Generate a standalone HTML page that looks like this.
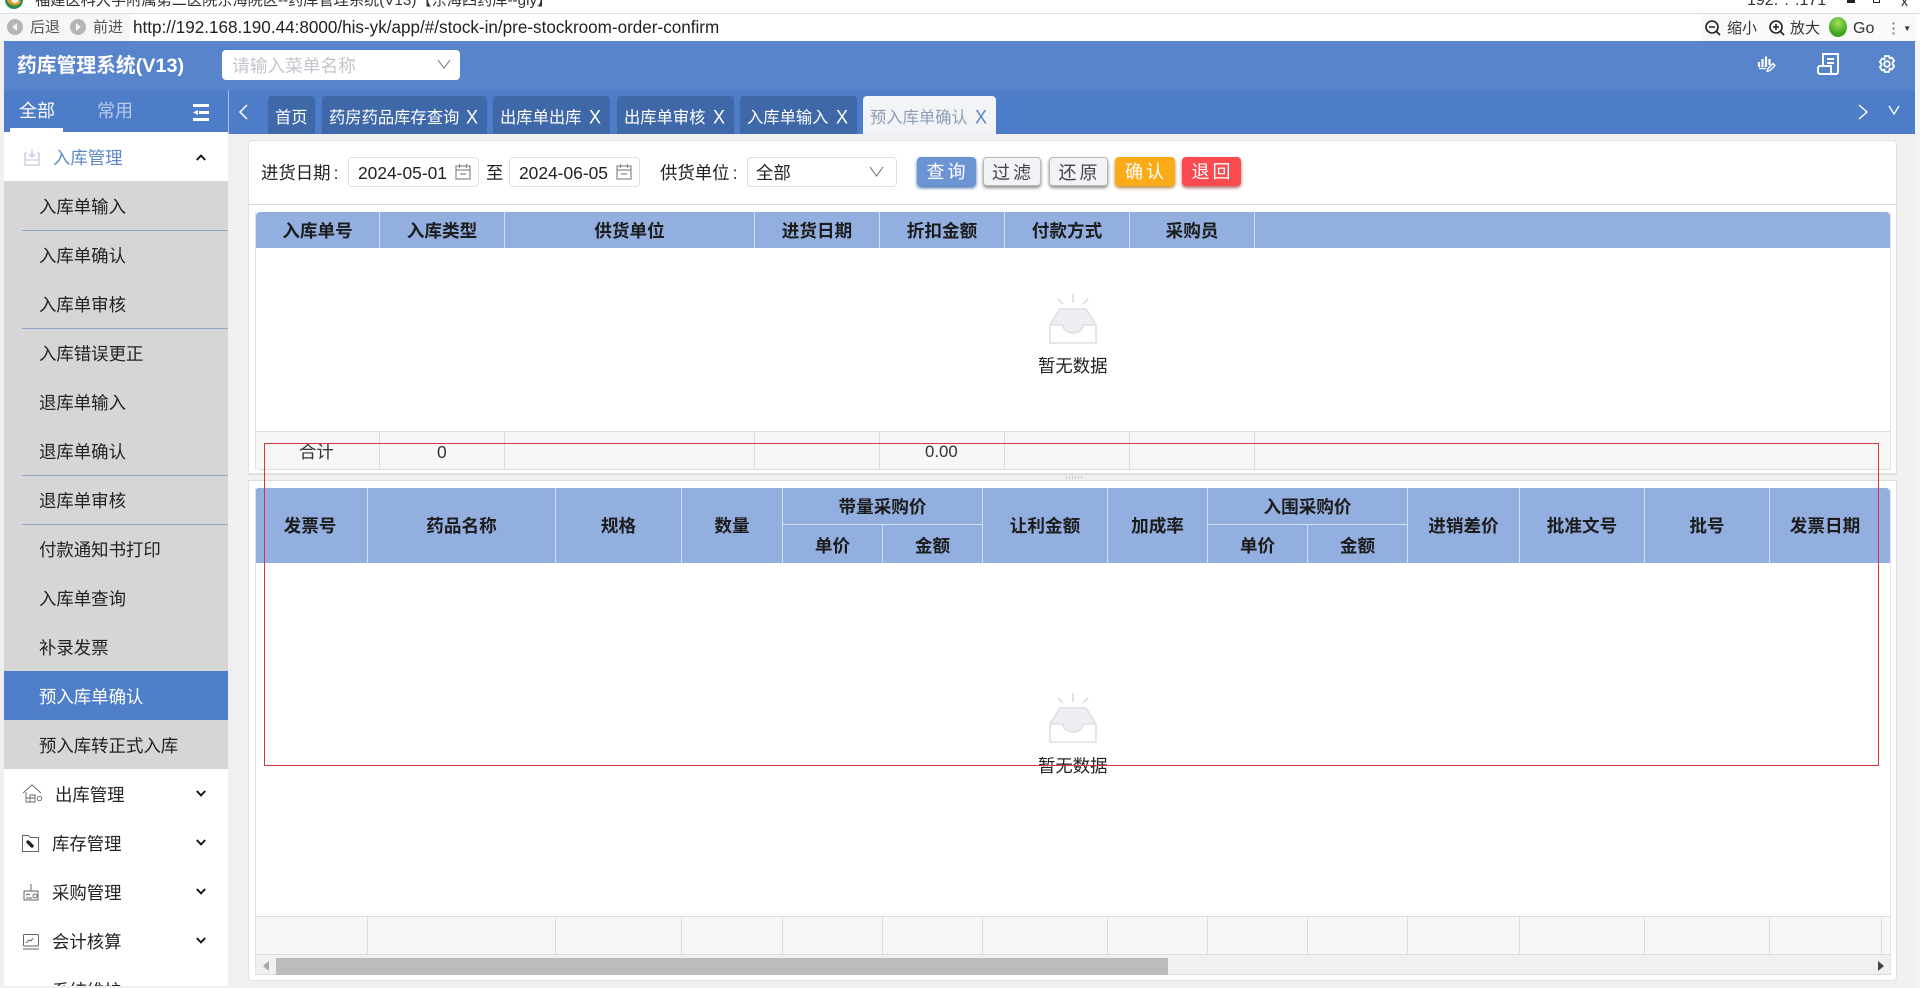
<!DOCTYPE html>
<html lang="zh"><head><meta charset="utf-8"><title>药库管理系统</title>
<style>
*{box-sizing:border-box}
html,body{margin:0;padding:0;width:1920px;height:988px;overflow:hidden;background:#f0f0f0;font-family:"Liberation Sans","Noto Sans CJK SC",sans-serif;color:#222}
.a{position:absolute;white-space:nowrap}
.t{position:absolute;white-space:nowrap;font-size:17.4px;line-height:24px;height:24px}
.tab{position:absolute;top:96px;height:38px;background:#3f68a8;color:#fff;font-size:16.3px;line-height:44px;padding-left:7px;border-radius:4px 4px 0 0;white-space:nowrap}
.tab i{font-style:normal;position:absolute;right:9px;top:-1px;font-size:18px;transform:scaleY(1.1)}
.mi{position:absolute;left:4px;width:224px;height:49px;background:#d6d6d6;font-size:17.4px;line-height:53px;padding-left:35px;color:#222;white-space:nowrap;overflow:hidden}
.sep{position:absolute;left:22px;width:206px;height:1px;background:#8ea6c9}
.mg{position:absolute;left:4px;width:224px;height:49px;background:#fff;font-size:17.4px;line-height:53px;color:#222;white-space:nowrap;overflow:hidden}
.btn{position:absolute;top:157px;height:29px;border-radius:4px;font-size:18px;line-height:30px;text-align:center;letter-spacing:3px;padding-left:2px}
.th{position:absolute;background:#93afdf;border-right:1px solid #d4dff2;font-weight:700;font-size:17.6px;color:#1c1c1c;display:flex;align-items:center;justify-content:center;white-space:nowrap}
.line{position:absolute;background:#dcdcdc}
.input{position:absolute;top:157px;height:30px;background:#fff;border:1px solid #dcdfe6;border-radius:4px}
svg{position:absolute;overflow:visible}
</style></head><body>

<!-- browser chrome -->
<div class="a" style="left:0;top:0;width:1920px;height:13px;background:#fff;overflow:hidden">
<svg style="left:4px;top:-9px" width="20" height="18" viewBox="0 0 20 18"><circle cx="10" cy="9" r="9" fill="#2f8f4e"/><path d="M3 9a8 8 0 0 0 14 2L10 4z" fill="#e89a2b"/><circle cx="11" cy="8" r="4" fill="#f3f3f3"/></svg>
<div class="a" style="left:35px;top:-9px;font-size:15.2px;line-height:20px;color:#333">福建医科大学附属第二医院东海院区--药库管理系统(V13)【东海四药库--gly】</div>
<div class="a" style="left:1747px;top:-9px;font-size:16px;line-height:20px;color:#333">192.*.*.171</div>
<div class="a" style="left:1847px;top:0;width:8px;height:3px;background:#222"></div>
<div class="a" style="left:1873px;top:0;width:7px;height:3px;border:1px solid #222;border-top:0"></div>
<div class="a" style="left:1901px;top:-9px;font-size:14px;line-height:20px;color:#222">x</div>
</div>
<div class="a" style="left:0;top:13px;width:1920px;height:1px;background:#dedede"></div>
<div class="a" style="left:0;top:14px;width:1920px;height:27px;background:#fff"></div>
<div class="a" style="left:0;top:14px;width:130px;height:27px;background:#f6f6f6"></div>
<div class="a" style="left:1701px;top:14px;width:215px;height:27px;background:#f9f9f9"></div>
<svg style="left:6px;top:18px" width="18" height="18" viewBox="0 0 18 18"><circle cx="9" cy="9" r="8" fill="#b5b5b5"/><path d="M11 5L6 9l5 4z" fill="#f4f4f4"/></svg>
<svg style="left:69px;top:18px" width="18" height="18" viewBox="0 0 18 18"><circle cx="9" cy="9" r="8" fill="#b5b5b5"/><path d="M7 5l5 4-5 4z" fill="#f4f4f4"/></svg>
<div class="a" style="left:30px;top:17px;font-size:15px;line-height:22px;color:#555">后退</div>
<div class="a" style="left:93px;top:17px;font-size:15px;line-height:22px;color:#555">前进</div>
<div class="a" style="left:133px;top:17px;font-size:17.1px;line-height:22px;color:#222">http://192.168.190.44:8000/his-yk/app/#/stock-in/pre-stockroom-order-confirm</div>
<svg style="left:1704px;top:19px" width="18" height="18" viewBox="0 0 18 18" fill="none" stroke="#222" stroke-width="1.6"><circle cx="8" cy="8" r="6"/><path d="M12.5 12.5L16 16M5 8h6"/></svg>
<div class="a" style="left:1727px;top:18px;font-size:15px;line-height:22px;color:#333">缩小</div>
<svg style="left:1768px;top:19px" width="18" height="18" viewBox="0 0 18 18" fill="none" stroke="#222" stroke-width="1.6"><circle cx="8" cy="8" r="6"/><path d="M12.5 12.5L16 16M5 8h6M8 5v6"/></svg>
<div class="a" style="left:1790px;top:18px;font-size:15px;line-height:22px;color:#333">放大</div>
<div class="a" style="left:1829px;top:17px;width:18px;height:20px;border-radius:50%;background:radial-gradient(circle at 50% 30%,#a4e05a,#3aa01c 70%)"></div>
<div class="a" style="left:1853px;top:18px;font-size:16px;line-height:22px;color:#333">Go</div>
<div class="a" style="left:1886px;top:18px;font-size:15px;line-height:22px;color:#666">⋮<span style="font-size:8px;color:#333;vertical-align:2px"> ▼</span></div>

<!-- header -->
<div class="a" style="left:0;top:41px;width:4px;height:947px;background:#f0f0f0"></div>
<div class="a" style="left:1915px;top:41px;width:5px;height:947px;background:#f4f4f4"></div>
<div class="a" style="left:4px;top:41px;width:1911px;height:49px;background:#5884cc"></div>
<div class="a" style="left:4px;top:90px;width:1911px;height:44px;background:#4d7cc8"></div>
<div class="a" style="left:17px;top:52px;font-size:19.8px;line-height:28px;font-weight:700;color:#fff">药库管理系统(V13)</div>
<div class="a" style="left:222px;top:50px;width:238px;height:30px;background:#fff;border-radius:4px;font-size:17.7px;line-height:32px;padding-left:10px;color:#c4c6cc">请输入菜单名称</div>
<svg style="left:437px;top:59px" width="14" height="10" viewBox="0 0 14 10" fill="none" stroke="#8a8f98" stroke-width="1.2"><path d="M1 1l6 8 6-8"/></svg>
<svg style="left:1758px;top:55px" width="18" height="18" viewBox="0 0 18 18" fill="none" stroke="#fff"><path d="M1 7v5M4.5 4v8M8 1.5V12M11.5 4v6" stroke-width="2.2"/><path d="M1 13.5h7" stroke-width="1.4"/><path d="M9 16.5l1-3 5-5 2 2-5 5z" stroke-width="1.4" stroke-linejoin="round"/></svg>
<svg style="left:1817px;top:53px" width="22" height="22" viewBox="0 0 22 22" fill="none" stroke="#fff" stroke-width="1.9"><path d="M6 13V1h15v18a2 2 0 0 1-2 2H3a2.5 2.5 0 0 1-2-2.5V15a2 2 0 0 1 2-2h11v6a2 2 0 0 0 2 2M10 6h7M10 10h7"/></svg>
<svg style="left:1878px;top:55px" width="18" height="18" viewBox="0 0 18 18" fill="none" stroke="#fff" stroke-width="1.8" stroke-linejoin="round"><path d="M7 1h4l.6 2.4 2.2-.9 2.4 3.4-1.6 1.8 0 1.6 1.6 1.8-2.4 3.4-2.2-.9L11 17H7l-.6-2.4-2.2.9-2.4-3.4 1.6-1.8 0-1.6-1.6-1.8 2.4-3.4 2.2.9z"/><circle cx="9" cy="9" r="2.8"/></svg>

<!-- sidebar tabs -->
<div class="a" style="left:19px;top:99px;font-size:18px;line-height:24px;color:#fff">全部</div>
<div class="a" style="left:97px;top:99px;font-size:18px;line-height:24px;color:#b9cbe8">常用</div>
<div class="a" style="left:10px;top:128px;width:53px;height:4px;background:#fff"></div>
<svg style="left:192px;top:104px" width="18" height="17" viewBox="0 0 18 17" fill="#fff"><rect x="1" y="0" width="16" height="3"/><rect x="7" y="7" width="10" height="3"/><path d="M1 8.5L6 6v5z"/><rect x="1" y="14" width="16" height="3"/></svg>
<div class="a" style="left:228px;top:90px;width:1px;height:44px;background:#a9c0e6"></div>
<svg style="left:237px;top:103px" width="12" height="18" viewBox="0 0 12 18" fill="none" stroke="#fff" stroke-width="1.5"><path d="M10 2L3 9l7 7"/></svg>

<!-- tabs -->
<div class="tab" style="left:268px;width:47px">首页</div>
<div class="tab" style="left:322px;width:165px">药房药品库存查询<i>X</i></div>
<div class="tab" style="left:493px;width:117px">出库单出库<i>X</i></div>
<div class="tab" style="left:617px;width:117px">出库单审核<i>X</i></div>
<div class="tab" style="left:740px;width:117px">入库单输入<i>X</i></div>
<div class="tab" style="left:863px;width:133px;background:#f2f4f7;color:#8d9db5">预入库单确认<i style="color:#5b84c6">X</i></div>
<svg style="left:1857px;top:103px" width="12" height="18" viewBox="0 0 12 18" fill="none" stroke="#fff" stroke-width="1.4"><path d="M2 2l8 7-8 7"/></svg>
<svg style="left:1888px;top:105px" width="12" height="10" viewBox="0 0 12 10" fill="none" stroke="#fff" stroke-width="1.3"><path d="M1 1l5 8 5-8"/></svg>

<!-- sidebar -->
<div class="mg" style="top:132px;color:#5f88c8;padding-left:49px">入库管理</div>
<svg style="left:23px;top:147px" width="18" height="20" viewBox="0 0 18 20" fill="none" stroke="#c3cbdb" stroke-width="1.3"><path d="M4 6H2v12h14V6h-2M9 2v8M6 7l3 3 3-3M2 13h14"/></svg>
<svg style="left:196px;top:154px" width="10" height="7" viewBox="0 0 10 7" fill="none" stroke="#111" stroke-width="1.9"><path d="M.8 6L5 1.6 9.2 6"/></svg>
<div class="mi" style="top:181px">入库单输入</div>
<div class="mi" style="top:230px">入库单确认</div>
<div class="mi" style="top:279px">入库单审核</div>
<div class="mi" style="top:328px">入库错误更正</div>
<div class="mi" style="top:377px">退库单输入</div>
<div class="mi" style="top:426px">退库单确认</div>
<div class="mi" style="top:475px">退库单审核</div>
<div class="mi" style="top:524px">付款通知书打印</div>
<div class="mi" style="top:573px">入库单查询</div>
<div class="mi" style="top:622px">补录发票</div>
<div class="mi" style="top:671px;background:#4f7ecb;color:#fff">预入库单确认</div>
<div class="mi" style="top:720px">预入库转正式入库</div>
<div class="sep" style="top:230px"></div><div class="sep" style="top:328px"></div><div class="sep" style="top:475px"></div><div class="sep" style="top:524px"></div>
<div class="mg" style="top:769px;padding-left:51px">出库管理</div>
<div class="mg" style="top:818px;padding-left:48px">库存管理</div>
<div class="mg" style="top:867px;padding-left:48px">采购管理</div>
<div class="mg" style="top:916px;padding-left:48px">会计核算</div>
<div class="mg" style="top:965px;height:21px;padding-left:48px">系统维护</div>
<svg style="left:196px;top:790px" width="10" height="7" viewBox="0 0 10 7" fill="none" stroke="#111" stroke-width="1.9"><path d="M.8 1L5 5.4 9.2 1"/></svg>
<svg style="left:196px;top:839px" width="10" height="7" viewBox="0 0 10 7" fill="none" stroke="#111" stroke-width="1.9"><path d="M.8 1L5 5.4 9.2 1"/></svg>
<svg style="left:196px;top:888px" width="10" height="7" viewBox="0 0 10 7" fill="none" stroke="#111" stroke-width="1.9"><path d="M.8 1L5 5.4 9.2 1"/></svg>
<svg style="left:196px;top:937px" width="10" height="7" viewBox="0 0 10 7" fill="none" stroke="#111" stroke-width="1.9"><path d="M.8 1L5 5.4 9.2 1"/></svg>
<svg style="left:23px;top:784px" width="20" height="19" viewBox="0 0 20 19" fill="none" stroke="#666" stroke-width=".9"><path d="M0 9l9-8 9 8M3 8v10h9v-7H7v7M3 14h9"/><circle cx="16.5" cy="14.5" r="2.2"/></svg>
<svg style="left:22px;top:835px" width="17" height="17" viewBox="0 0 17 17" fill="none" stroke="#666" stroke-width="1"><path d="M.5.5h6l2 2h8v14H.5z"/><path d="M6 7l4 4" stroke="#222" stroke-width="3.4" stroke-linecap="round"/></svg>
<svg style="left:23px;top:884px" width="16" height="17" viewBox="0 0 16 17" fill="none" stroke="#666" stroke-width="1"><path d="M8 0v7M1 7h14v9H1z"/><path d="M3 11l2-1 2 1M3 14h6"/><circle cx="12" cy="12" r="2"/></svg>
<svg style="left:23px;top:934px" width="16" height="16" viewBox="0 0 16 16" fill="none" stroke="#666" stroke-width="1"><rect x=".5" y=".5" width="15" height="11.5" rx="1"/><path d="M3 9l3-3 2 1 2-3M0 15h16"/></svg>

<!-- upper panel -->
<div class="a" style="left:248px;top:140px;width:1649px;height:334px;background:#fff;border:1px solid #e2e2e2;border-radius:4px 4px 0 0"></div>
<div class="t" style="left:261px;top:161px">进货日期<span style="padding-left:3px">:</span></div>
<div class="input" style="left:348px;width:131px"></div>
<div class="t" style="left:358px;top:161px">2024-05-01</div>
<svg style="left:455px;top:163px" width="16" height="17" viewBox="0 0 16 17" fill="none" stroke="#8a8a8a" stroke-width="1.2"><path d="M1 3h14v13H1zM1 7h14M4.5 1v4M11.5 1v4M5 11h6"/></svg>
<div class="t" style="left:486px;top:161px">至</div>
<div class="input" style="left:509px;width:131px"></div>
<div class="t" style="left:519px;top:161px">2024-06-05</div>
<svg style="left:616px;top:163px" width="16" height="17" viewBox="0 0 16 17" fill="none" stroke="#8a8a8a" stroke-width="1.2"><path d="M1 3h14v13H1zM1 7h14M4.5 1v4M11.5 1v4M5 11h6"/></svg>
<div class="t" style="left:660px;top:161px">供货单位<span style="padding-left:3px">:</span></div>
<div class="input" style="left:747px;width:150px"></div>
<div class="t" style="left:756px;top:161px">全部</div>
<svg style="left:869px;top:166px" width="15" height="11" viewBox="0 0 15 11" fill="none" stroke="#7f8590" stroke-width="1.2"><path d="M1 1l6.5 9L14 1"/></svg>
<div class="btn" style="left:917px;width:59px;background:#6c94d2;color:#fff;box-shadow:0 2px 3px #4670b0">查询</div>
<div class="btn" style="left:983px;width:58px;background:#f2f3f6;border:1px solid #b9b9b9;color:#444;box-shadow:0 2px 3px #8c8c8c">过滤</div>
<div class="btn" style="left:1049px;width:59px;background:#f2f3f6;border:1px solid #b9b9b9;color:#444;box-shadow:0 2px 3px #8c8c8c">还原</div>
<div class="btn" style="left:1115px;width:60px;background:#fbab18;color:#fff;box-shadow:0 2px 3px #b98a3a">确认</div>
<div class="btn" style="left:1182px;width:59px;background:#fa4a4f;color:#fff;box-shadow:0 2px 3px #b56a6c">退回</div>
<div class="line" style="left:249px;top:204px;width:1647px;height:1px"></div>

<div class="th" style="left:256px;top:212px;width:124px;height:36px;border-top-left-radius:4px">入库单号</div>
<div class="th" style="left:380px;top:212px;width:125px;height:36px">入库类型</div>
<div class="th" style="left:505px;top:212px;width:250px;height:36px">供货单位</div>
<div class="th" style="left:755px;top:212px;width:125px;height:36px">进货日期</div>
<div class="th" style="left:880px;top:212px;width:125px;height:36px">折扣金额</div>
<div class="th" style="left:1005px;top:212px;width:125px;height:36px">付款方式</div>
<div class="th" style="left:1130px;top:212px;width:125px;height:36px">采购员</div>
<div class="a" style="left:1255px;top:212px;width:635px;height:36px;background:#93afdf;border-top-right-radius:4px"></div>
<div class="line" style="left:255px;top:212px;width:1px;height:258px;background:#e4e4e4"></div>
<div class="line" style="left:1890px;top:212px;width:1px;height:258px;background:#e4e4e4"></div>

<svg style="left:1048px;top:294px" width="50" height="50" viewBox="0 0 50 50"><path d="M2 31L12 15h26l10 16v18H2z" fill="#fff" stroke="#dcdfe6" stroke-width="1.6" stroke-linejoin="round"/><path d="M2 31L12 15h26l10 16H35a10 8 0 0 1-20 0z" fill="#edeff3" stroke="#dcdfe6" stroke-width="1.6" stroke-linejoin="round"/><path d="M25 0v9M10 5l5 5M40 5l-5 5" stroke="#dcdfe6" stroke-width="1.8" fill="none"/></svg>
<div class="a" style="left:1038px;top:354px;font-size:17.4px;line-height:24px;color:#222">暂无数据</div>

<div class="a" style="left:256px;top:431px;width:1634px;height:39px;background:#f7f7f7;border-top:1px solid #dcdcdc;border-bottom:1px solid #dcdcdc;border-bottom-left-radius:4px"></div>
<div class="line" style="left:379px;top:431px;width:1px;height:38px"></div>
<div class="line" style="left:504px;top:431px;width:1px;height:38px"></div>
<div class="line" style="left:754px;top:431px;width:1px;height:38px"></div>
<div class="line" style="left:879px;top:431px;width:1px;height:38px"></div>
<div class="line" style="left:1004px;top:431px;width:1px;height:38px"></div>
<div class="line" style="left:1129px;top:431px;width:1px;height:38px"></div>
<div class="line" style="left:1254px;top:431px;width:1px;height:38px"></div>
<div class="t" style="left:299px;top:440px;color:#333">合计</div>
<div class="t" style="left:437px;top:440px;color:#333">0</div>
<div class="t" style="left:925px;top:440px;color:#333;font-size:16.8px">0.00</div>

<!-- splitter -->
<div class="a" style="left:248px;top:474px;width:1649px;height:1px;background:#dcdcdc"></div>
<div class="a" style="left:248px;top:480px;width:1649px;height:1px;background:#dcdcdc"></div>
<div class="a" style="left:1066px;top:476px;width:18px;height:3px;background:repeating-linear-gradient(90deg,#c8c8c8 0 1px,transparent 1px 3px)"></div>

<!-- lower panel -->
<div class="a" style="left:248px;top:481px;width:1649px;height:500px;background:#fff;border:1px solid #e2e2e2;border-top:0;border-radius:0 0 4px 4px"></div>
<div class="th" style="left:255px;top:488px;width:113px;height:75px;padding-right:2px;border-top-left-radius:4px">发票号</div>
<div class="th" style="left:368px;top:488px;width:188px;height:75px">药品名称</div>
<div class="th" style="left:556px;top:488px;width:126px;height:75px">规格</div>
<div class="th" style="left:682px;top:488px;width:101px;height:75px">数量</div>
<div class="th" style="left:783px;top:488px;width:200px;height:37px;border-bottom:1px solid #d4dff2">带量采购价</div>
<div class="th" style="left:783px;top:525px;width:100px;height:38px;padding-top:2px">单价</div>
<div class="th" style="left:883px;top:525px;width:100px;height:38px;padding-top:2px">金额</div>
<div class="th" style="left:983px;top:488px;width:125px;height:75px">让利金额</div>
<div class="th" style="left:1108px;top:488px;width:100px;height:75px">加成率</div>
<div class="th" style="left:1208px;top:488px;width:200px;height:37px;border-bottom:1px solid #d4dff2">入围采购价</div>
<div class="th" style="left:1208px;top:525px;width:100px;height:38px;padding-top:2px">单价</div>
<div class="th" style="left:1308px;top:525px;width:100px;height:38px;padding-top:2px">金额</div>
<div class="th" style="left:1408px;top:488px;width:112px;height:75px">进销差价</div>
<div class="th" style="left:1520px;top:488px;width:125px;height:75px">批准文号</div>
<div class="th" style="left:1645px;top:488px;width:125px;height:75px">批号</div>
<div class="th" style="left:1770px;top:488px;width:120px;height:75px;border-right:0;border-top-right-radius:4px;padding-right:10px">发票日期</div>
<div class="line" style="left:255px;top:488px;width:1px;height:487px;background:#e4e4e4"></div>
<div class="line" style="left:1890px;top:488px;width:1px;height:487px;background:#e4e4e4"></div>

<svg style="left:1048px;top:693px" width="50" height="50" viewBox="0 0 50 50"><path d="M2 31L12 15h26l10 16v18H2z" fill="#fff" stroke="#dcdfe6" stroke-width="1.6" stroke-linejoin="round"/><path d="M2 31L12 15h26l10 16H35a10 8 0 0 1-20 0z" fill="#edeff3" stroke="#dcdfe6" stroke-width="1.6" stroke-linejoin="round"/><path d="M25 0v9M10 5l5 5M40 5l-5 5" stroke="#dcdfe6" stroke-width="1.8" fill="none"/></svg>
<div class="a" style="left:1038px;top:754px;font-size:17.4px;line-height:24px;color:#222">暂无数据</div>

<div class="a" style="left:256px;top:916px;width:1634px;height:39px;background:#f7f7f7;border-top:1px solid #dcdcdc;border-bottom:1px solid #dcdcdc"></div>
<div class="line" style="left:367px;top:916px;width:1px;height:38px"></div>
<div class="line" style="left:555px;top:916px;width:1px;height:38px"></div>
<div class="line" style="left:681px;top:916px;width:1px;height:38px"></div>
<div class="line" style="left:782px;top:916px;width:1px;height:38px"></div>
<div class="line" style="left:882px;top:916px;width:1px;height:38px"></div>
<div class="line" style="left:982px;top:916px;width:1px;height:38px"></div>
<div class="line" style="left:1107px;top:916px;width:1px;height:38px"></div>
<div class="line" style="left:1207px;top:916px;width:1px;height:38px"></div>
<div class="line" style="left:1307px;top:916px;width:1px;height:38px"></div>
<div class="line" style="left:1407px;top:916px;width:1px;height:38px"></div>
<div class="line" style="left:1519px;top:916px;width:1px;height:38px"></div>
<div class="line" style="left:1644px;top:916px;width:1px;height:38px"></div>
<div class="line" style="left:1769px;top:916px;width:1px;height:38px"></div>
<div class="line" style="left:1881px;top:916px;width:1px;height:38px"></div>
<div class="a" style="left:256px;top:955px;width:1634px;height:20px;background:#f0f0f0;border-bottom:1px solid #dcdcdc"></div>
<div class="a" style="left:276px;top:958px;width:892px;height:17px;background:#bcbcbc"></div>
<div class="a" style="left:263px;top:961px;width:0;height:0;border:5px solid transparent;border-right:6px solid #a8a8a8;border-left:0"></div>
<div class="a" style="left:1878px;top:961px;width:0;height:0;border:5px solid transparent;border-left:6px solid #444;border-right:0"></div>

<!-- red annotation -->
<div class="a" style="left:264px;top:443px;width:1615px;height:323px;border:1px solid #d8363f"></div>
</body></html>
